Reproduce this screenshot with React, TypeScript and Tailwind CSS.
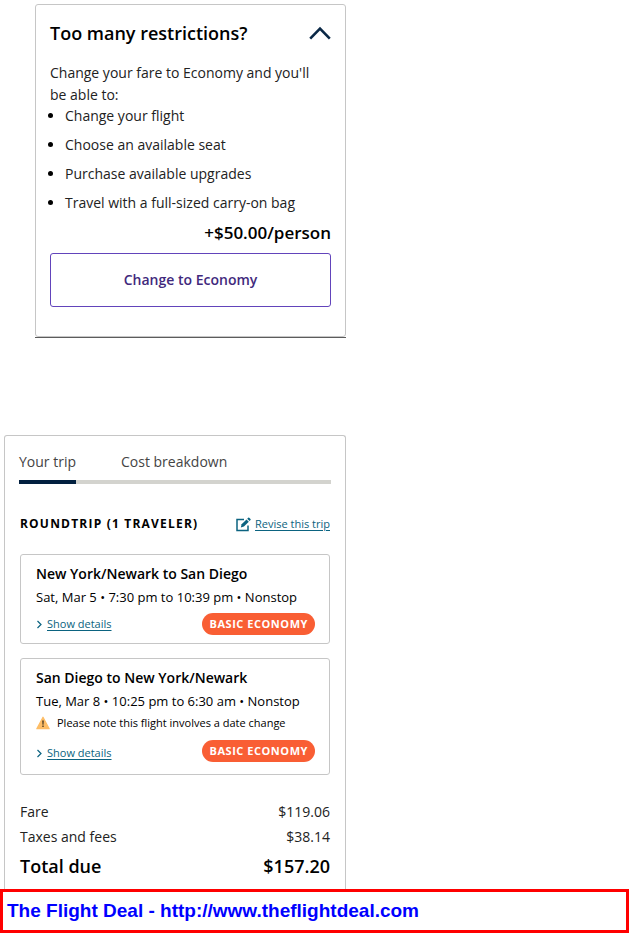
import { useState } from 'react';

const perks = [
  'Change your flight',
  'Choose an available seat',
  'Purchase available upgrades',
  'Travel with a full-sized carry-on bag',
];

const flights = [
  {
    route: 'New York/Newark to San Diego',
    info: 'Sat, Mar 5 • 7:30 pm to 10:39 pm • Nonstop',
    note: '',
  },
  {
    route: 'San Diego to New York/Newark',
    info: 'Tue, Mar 8 • 10:25 pm to 6:30 am • Nonstop',
    note: 'Please note this flight involves a date change',
  },
];

const tabs = ['Your trip', 'Cost breakdown'];

function WarningIcon() {
  return (
    <svg className="w-[14px] h-[14px]" viewBox="0 0 14 14" aria-hidden="true">
      <path d="M7 1.2 13.2 12.7H.8Z" fill="#fdbd66" stroke="#fdbd66" strokeWidth="1.2" strokeLinejoin="round" />
      <path d="M6.1 4.5h1.8l-.3 4.2H6.4ZM6.2 9.5h1.6V11H6.2Z" fill="#5f4a2b" />
    </svg>
  );
}

function EditIcon() {
  return (
    <svg className="w-[15px] h-[15px]" viewBox="0 0 15 15" aria-hidden="true">
      <path d="M8 2.5H1V13.5H12V8.5" fill="none" stroke="#0b6380" strokeWidth="1.5" />
      <path d="M4.8 10.4 5.6 7.3 10.5 2.4 12.8 4.7 7.9 9.6Z" fill="#0b6380" />
      <path d="M11.2 1.7 12.2.7Q12.7.2 13.2.7L14.5 2Q15 2.5 14.5 3L13.5 4Z" fill="#0b6380" />
    </svg>
  );
}

function FlightCard({ route, info, note }: { route: string; info: string; note: string }) {
  return (
    <li
      className={
        note
          ? 'border border-[#c6c6c6] rounded-[3px] pl-[15px] pr-[14px] pt-2 pb-3'
          : 'border border-[#c6c6c6] rounded-[3px] pl-[15px] pr-[14px] pt-2 pb-2'
      }
    >
      <h3 className="text-sm leading-[22px] font-semibold">{route}</h3>
      <p className="text-[13px] leading-6">{info}</p>
      {note && (
        <p className="flex items-center gap-[7px] text-[11px] leading-5">
          <WarningIcon />
          {note}
        </p>
      )}
      <div className={note ? 'flex items-end justify-between mt-[7px]' : 'flex items-center justify-between mt-1'}>
        <a href="#details" className="flex items-center gap-1 text-[11px] leading-[18px] text-[#0b6380]">
          <svg className="w-[7px] h-[9px]" viewBox="0 0 7 9" fill="none" stroke="currentColor" strokeWidth="1.2" aria-hidden="true">
            <path d="M1.5 1 5 4.5 1.5 8" />
          </svg>
          <span className="underline underline-offset-2">Show details</span>
        </a>
        <span className="rounded-full bg-[#f95e34] px-[7px] text-[11px] leading-[22px] font-bold tracking-wider text-white">
          BASIC ECONOMY
        </span>
      </div>
    </li>
  );
}

export default function App() {
  const [open, setOpen] = useState(true);
  const [tab, setTab] = useState('Your trip');

  return (
    <div className="bg-white text-black font-['Open_Sans',sans-serif]">
      <main className="max-w-[346px] pl-1 pt-1">
        <div className="ml-[31px] border-b border-[#5c5c5c]">
          <section className="border border-[#c6c6c6] rounded-[3px] px-[14px] pt-[15px] pb-[29px]">
            <h2>
              <button
                type="button"
                aria-expanded={open}
                onClick={() => setOpen(!open)}
                className="flex w-full items-center justify-between text-lg leading-[26px] font-semibold"
              >
                Too many restrictions?
                <svg
                  className={open ? 'w-[22px] h-[14px]' : 'w-[22px] h-[14px] rotate-180'}
                  viewBox="0 0 22 14"
                  fill="none"
                  stroke="#0a2846"
                  strokeWidth="2.6"
                  aria-hidden="true"
                >
                  <path d="M1.2 12.6 11 2.6 20.8 12.6" />
                </svg>
              </button>
            </h2>
            {open && (
              <>
                <p className="mt-4 pr-3 text-sm leading-[22px] text-[#222]">
                  Change your fare to Economy and you'll be able to:
                </p>
                <ul className="list-disc pl-[15px] text-sm leading-5 text-[#222] marker:text-black">
                  {perks.map(perk => (
                    <li key={perk} className="mb-[9px]">{perk}</li>
                  ))}
                </ul>
                <p className="text-right text-[17px] leading-[22px] font-semibold">+$50.00/person</p>
                <button
                  type="button"
                  className="mt-[9px] w-full h-[54px] rounded-[3px] border border-[#6244bb] text-sm font-semibold text-[#41297c]"
                >
                  Change to Economy
                </button>
              </>
            )}
          </section>
        </div>

        <section className="mt-[97px] border border-b-0 border-[#c6c6c6] rounded-t-[3px] px-[14px] pt-4 pb-[10px]">
          <div role="tablist" className="flex gap-[45px] border-b-4 border-[#d3d3ce] text-sm leading-5 text-[#444]">
            {tabs.map(name => (
              <button
                key={name}
                type="button"
                role="tab"
                aria-selected={tab === name}
                onClick={() => setTab(name)}
                className={
                  tab === name
                    ? '-mb-1 border-b-4 border-[#02203f] pb-2'
                    : '-mb-1 border-b-4 border-transparent pb-2'
                }
              >
                {name}
              </button>
            ))}
          </div>

          <div className="px-px">
            <div className="mt-[30px] flex items-center justify-between">
              <h2 className="text-xs leading-5 font-bold tracking-widest">ROUNDTRIP (1 TRAVELER)</h2>
              <a href="#revise" className="flex items-center gap-1 text-[11px] leading-5 text-[#0b6380]">
                <EditIcon />
                <span className="underline underline-offset-2">Revise this trip</span>
              </a>
            </div>

            <ul className="mt-5 flex flex-col gap-[14px]">
              {flights.map(flight => (
                <FlightCard key={flight.route} {...flight} />
              ))}
            </ul>

            <dl className="mt-6 text-sm leading-[25px] text-[#222]">
              <div className="flex justify-between">
                <dt>Fare</dt>
                <dd>$119.06</dd>
              </div>
              <div className="flex justify-between">
                <dt>Taxes and fees</dt>
                <dd>$38.14</dd>
              </div>
              <div className="mt-1 flex justify-between text-lg leading-[26px] font-semibold text-black">
                <dt>Total due</dt>
                <dd>$157.20</dd>
              </div>
            </dl>
          </div>
        </section>
      </main>

      <footer className="border-[3px] border-[#ff0000] px-1 py-[7px] font-['Liberation_Sans',Arial,sans-serif] text-[19px] leading-6 font-bold text-[#0000ff]">
        <a href="http://www.theflightdeal.com">The Flight Deal - http://www.theflightdeal.com</a>
      </footer>
    </div>
  );
}
